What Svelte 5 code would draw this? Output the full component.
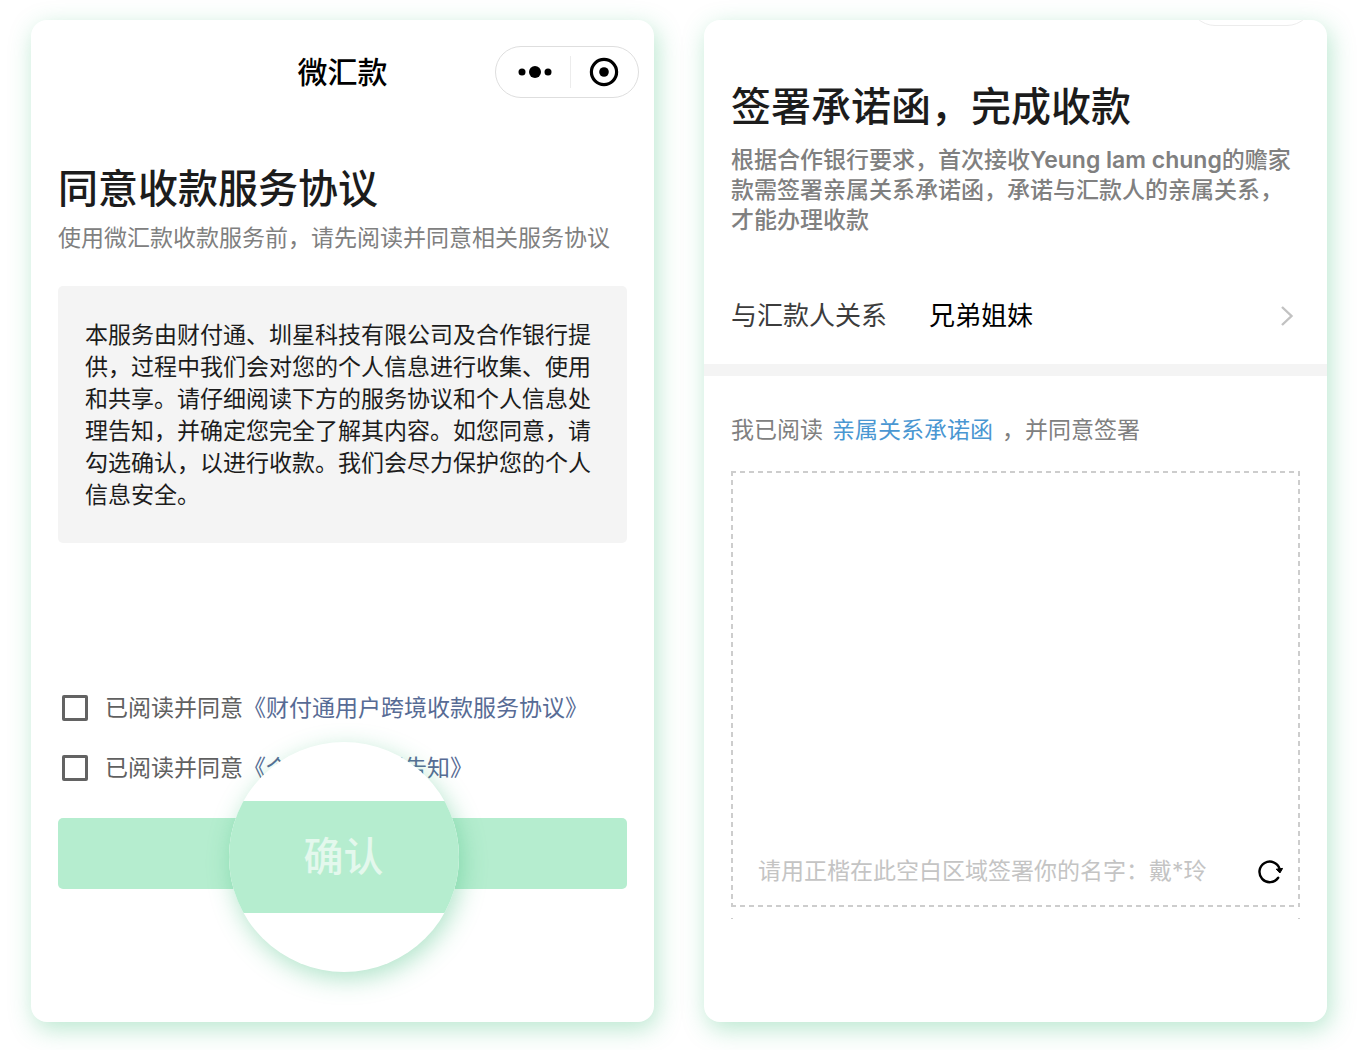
<script>
  const agreements = [
    { id: 'service', name: '《财付通用户跨境收款服务协议》' },
    { id: 'privacy', name: '《个人信息处理告知》' }
  ];
  const relations = ['兄弟姐妹', '父母', '配偶', '子女'];

  let accepted = $state({ service: false, privacy: false });
  let relation = $state('兄弟姐妹');
</script>

<main class="page">
  <section class="card consent">
    <header class="nav">
      <h1 class="nav-title">微汇款</h1>
      <div class="capsule">
        <button type="button" class="capsule-btn" aria-label="更多">
          <svg width="36" height="16" viewBox="0 0 36 16" aria-hidden="true">
            <circle cx="5" cy="8" r="3.5" />
            <circle cx="18" cy="8" r="6" />
            <circle cx="31" cy="8" r="3.5" />
          </svg>
        </button>
        <button type="button" class="capsule-btn close" aria-label="关闭">
          <svg width="30" height="30" viewBox="0 0 30 30" aria-hidden="true">
            <circle cx="15" cy="15" r="12.6" fill="none" stroke="#000" stroke-width="3.2" />
            <circle cx="15" cy="15" r="4.8" />
          </svg>
        </button>
      </div>
    </header>

    <h2 class="title">同意收款服务协议</h2>
    <p class="subtitle">使用微汇款收款服务前，请先阅读并同意相关服务协议</p>

    <p class="notice">
      本服务由财付通、圳星科技有限公司及合作银行提供，过程中我们会对您的个人信息进行收集、使用和共享。请仔细阅读下方的服务协议和个人信息处理告知，并确定您完全了解其内容。如您同意，请勾选确认，以进行收款。我们会尽力保护您的个人信息安全。
    </p>

    <div class="checks">
      {#each agreements as item (item.id)}
        <div class="check">
          <input type="checkbox" id={item.id} bind:checked={accepted[item.id]} />
          <span><label for={item.id}>已阅读并同意</label><a href="#{item.id}">{item.name}</a></span>
        </div>
      {/each}
    </div>

    <button type="button" class="confirm">
      <span class="lens"><span class="lens-band">确认</span></span>
    </button>
  </section>

  <section class="card sign">
    <span class="capsule-edge" aria-hidden="true"></span>
    <h2 class="title">签署承诺函，完成收款</h2>
    <p class="desc">根据合作银行要求，首次接收<b>Yeung lam chung</b>的赡家款需签署亲属关系承诺函，承诺与汇款人的亲属关系，才能办理收款</p>

    <div class="relation">
      <label for="relation">与汇款人关系</label>
      <select id="relation" bind:value={relation}>
        {#each relations as name (name)}
          <option value={name}>{name}</option>
        {/each}
      </select>
      <svg class="chevron" width="14" height="22" viewBox="0 0 14 22" aria-hidden="true">
        <path d="M2 2 L11.5 11 L2 20" fill="none" stroke="#c2c2c2" stroke-width="2.4" />
      </svg>
    </div>

    <hr class="band" />

    <p class="read">我已阅读<a href="#letter">亲属关系承诺函</a>，并同意签署</p>

    <div class="pad">
      <p class="hint">请用正楷在此空白区域签署你的名字：戴*玲</p>
      <button type="button" class="redo" aria-label="重新签署">
        <svg width="26" height="26" viewBox="0 0 26 26" aria-hidden="true">
          <path d="M21.2 18.8 A10.3 10.3 0 1 1 22.6 9.8" fill="none" stroke="#000" stroke-width="2.4" stroke-linecap="round" />
          <path d="M19.2 10.2 L25.6 9.4 L22.9 14 Z" stroke="#000" stroke-width="1" stroke-linejoin="round" />
        </svg>
      </button>
    </div>
    <div class="pad-end"></div>
  </section>
</main>

<style>
  :global(body) {
    margin: 0;
    background: #fff;
  }

  .page {
    display: grid;
    grid-template-columns: 1fr 1fr;
    gap: 50px;
    padding: 20px 32px 28px 31px;
    font-family: Inter, 'Noto Sans CJK SC', sans-serif;
    font-size: 23px;
    line-height: 32px;
    color: #1c1c1c;
  }

  h1, h2, p {
    margin: 0;
  }

  a {
    text-decoration: none;
  }

  button {
    padding: 0;
    border: 0;
    background: none;
    font: inherit;
    cursor: pointer;
  }

  svg {
    display: block;
  }

  .card {
    position: relative;
    box-sizing: border-box;
    padding: 0 27px;
    overflow: hidden;
    border-radius: 16px;
    background: #fff;
    box-shadow: 3px 7px 24px rgba(50, 185, 115, 0.34);
  }

  .consent {
    padding-top: 26px;
    padding-bottom: 133px;
  }

  .sign {
    padding-top: 62px;
  }

  .nav {
    display: grid;
    grid-template-columns: 1fr auto 1fr;
    align-items: center;
    margin-right: -12px;
    margin-left: -12px;
  }

  .nav-title {
    grid-column: 2;
    font-size: 30px;
    font-weight: 500;
    line-height: 52px;
    color: #000;
  }

  .capsule {
    display: flex;
    justify-self: end;
    box-sizing: border-box;
    width: 144px;
    height: 52px;
    border: 1px solid #dedede;
    border-radius: 26px;
  }

  .capsule-btn {
    display: flex;
    flex: 1;
    align-items: center;
    justify-content: center;
    position: relative;
  }

  .capsule-btn:first-child {
    padding-left: 5px;
  }

  .close::before {
    content: '';
    position: absolute;
    top: 9px;
    bottom: 9px;
    left: 0;
    width: 1px;
    background: #ececec;
  }

  .title {
    font-size: 40px;
    font-weight: 500;
    line-height: 50px;
    white-space: nowrap;
  }

  .consent .title {
    margin-top: 66px;
  }

  .subtitle {
    margin-top: 8px;
    color: #808080;
  }

  .notice {
    margin-top: 32px;
    padding: 33px 27px 32px;
    border-radius: 5px;
    background: #f4f4f4;
  }

  .checks {
    display: grid;
    gap: 28px;
    margin-top: 149px;
    margin-left: 4px;
    color: #606060;
  }

  .check {
    display: flex;
    align-items: center;
    gap: 17px;
  }

  .check input {
    appearance: none;
    box-sizing: border-box;
    width: 26px;
    height: 26px;
    margin: 0;
    border: 3px solid #636363;
    border-radius: 2px;
    background: #fff;
  }

  .check input:checked {
    background: #b5edcf;
  }

  .check a {
    color: #576b95;
  }

  .confirm {
    display: block;
    position: relative;
    width: 100%;
    height: 71px;
    margin-top: 34px;
    border-radius: 5px;
    background: #b5edcf;
  }

  .lens {
    position: absolute;
    top: 50%;
    left: 50%;
    display: flex;
    align-items: center;
    width: 230px;
    height: 230px;
    margin: -112px 0 0 -114px;
    overflow: hidden;
    border-radius: 50%;
    background: #fff;
    box-shadow: 3px 7px 24px rgba(50, 185, 115, 0.38);
  }

  .lens-band {
    flex: 1;
    background: #b5edcf;
    color: #e4f8ed;
    font-size: 40px;
    font-weight: 500;
    line-height: 112px;
  }

  .capsule-edge {
    position: absolute;
    top: -46px;
    right: 14px;
    box-sizing: border-box;
    width: 124px;
    height: 52px;
    border: 1px solid #ececec;
    border-radius: 26px;
  }

  .desc {
    margin-top: 13px;
    line-height: 30px;
    font-weight: 500;
    color: #808080;
  }

  .desc b {
    font-weight: 600;
  }

  .relation {
    display: flex;
    align-items: center;
    margin-top: 61px;
    font-size: 26px;
    line-height: 40px;
  }

  .relation label {
    color: #3c3c3c;
  }

  .relation select {
    appearance: none;
    flex: 1;
    height: 40px;
    margin: 0 0 0 42px;
    padding: 0;
    border: 0;
    background: none;
    font: inherit;
    color: #000;
  }

  .chevron {
    margin-right: 6px;
  }

  .band {
    height: 12px;
    margin: 28px -27px 0;
    border: 0;
    background: #f4f4f4;
  }

  .read {
    margin-top: 38px;
    color: #808080;
  }

  .read a {
    margin: 0 9px;
    color: #4a97d2;
  }

  .pad {
    --dash: #cdcdcd 0 5px, transparent 5px 9px;
    display: flex;
    align-items: flex-end;
    justify-content: space-between;
    box-sizing: border-box;
    min-height: 436px;
    margin-top: 25px;
    padding: 20px 17px 20px 27px;
    background:
      repeating-linear-gradient(90deg, var(--dash)) 0 0 / 100% 2px no-repeat,
      repeating-linear-gradient(90deg, var(--dash)) 0 100% / 100% 2px no-repeat,
      repeating-linear-gradient(180deg, var(--dash)) 0 0 / 2px 100% no-repeat,
      repeating-linear-gradient(180deg, var(--dash)) 100% 0 / 2px 100% no-repeat;
  }

  .hint {
    color: #c4c4c4;
  }

  .redo {
    padding-bottom: 2px;
  }

  .pad-end {
    height: 1px;
    margin-top: 11px;
    border: solid #cdcdcd;
    border-width: 0 2px;
  }
</style>
